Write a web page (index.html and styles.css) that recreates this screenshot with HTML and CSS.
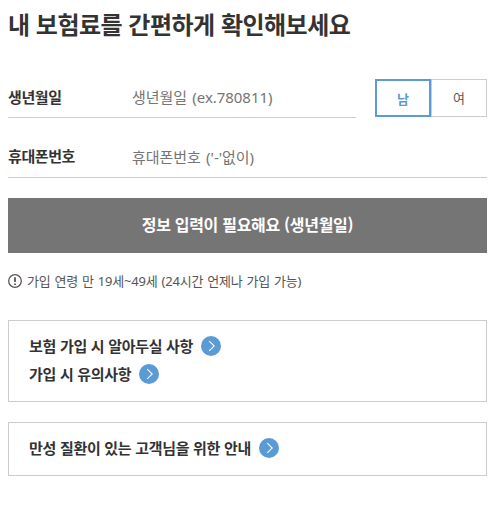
FILE: index.html
```html
<!DOCTYPE html>
<html lang="ko">
<head>
	<meta charset="UTF-8">
	<title>보험료 확인</title>
	<link rel="stylesheet" href="styles.css">
</head>
<body>
	<h1>내 보험료를 간편하게 확인해보세요</h1>
	<form>
		<div class="row">
			<div class="field">
				<label for="birth">생년월일</label>
				<input type="text" id="birth" name="birth" placeholder="생년월일 (ex.780811)">
			</div>
			<div class="gender">
				<button type="button" class="on">남</button>
				<button type="button">여</button>
			</div>
		</div>
		<div class="row">
			<div class="field phone">
				<label for="phone">휴대폰번호</label>
				<input type="text" id="phone" name="phone" placeholder="휴대폰번호 ('-'없이)">
			</div>
		</div>
		<button type="button" class="submit">정보 입력이 필요해요 (생년월일)</button>
	</form>

	<p class="notice">
		<svg width="14" height="14" viewBox="0 0 14 14"><circle cx="7" cy="7" r="6.3" fill="none" stroke="#555" stroke-width="1.3"/><path d="M7 3.2v4.9M7 9.4v1.6" stroke="#555" stroke-width="1.8"/></svg>
		<span>가입 연령 만 19세~49세 (24시간 언제나 가입 가능)</span>
	</p>

	<div class="box">
		<a class="link">
			<span>보험 가입 시 알아두실 사항</span>
			<svg width="20" height="20" viewBox="0 0 20 20"><circle cx="10" cy="10" r="10" fill="#5b9bd5"/><path d="M8.2 5.2l5 4.8-5 4.8" fill="none" stroke="#fff" stroke-width="1.1"/></svg>
		</a>
		<a class="link">
			<span>가입 시 유의사항</span>
			<svg width="20" height="20" viewBox="0 0 20 20"><circle cx="10" cy="10" r="10" fill="#5b9bd5"/><path d="M8.2 5.2l5 4.8-5 4.8" fill="none" stroke="#fff" stroke-width="1.1"/></svg>
		</a>
	</div>

	<div class="box">
		<a class="link">
			<span>만성 질환이 있는 고객님을 위한 안내</span>
			<svg width="20" height="20" viewBox="0 0 20 20"><circle cx="10" cy="10" r="10" fill="#5b9bd5"/><path d="M8.2 5.2l5 4.8-5 4.8" fill="none" stroke="#fff" stroke-width="1.1"/></svg>
		</a>
	</div>
</body>
</html>
```
FILE: styles.css
```css
* {
	box-sizing: border-box;
}
body {
	width: 479px;
	margin: 0 0 0 8px;
	background: #fff;
	color: #333;
	font-family: "Noto Sans CJK KR", sans-serif;
}
h1 {
	margin: 0;
	padding-top: 6px;
	height: 79px;
	font-size: 24px;
	line-height: 36px;
	font-weight: 700;
	letter-spacing: -0.5px;
	white-space: nowrap;
}
button,
input {
	font-family: inherit;
}
.row {
	display: flex;
	justify-content: space-between;
}
.field {
	display: flex;
	align-items: center;
	width: 348px;
	height: 39px;
	padding-bottom: 4px;
	border-bottom: 1px solid #ccc;
}
.field.phone {
	width: 100%;
	height: 60px;
	padding-top: 20px;
}
.field label {
	width: 124px;
	font-size: 15px;
	font-weight: 700;
	letter-spacing: -0.4px;
}
.field input {
	flex: 1;
	min-width: 0;
	padding: 2px 0 0;
	border: 0;
	outline: 0;
	background: none;
	font-family: "Noto Sans", "Noto Sans CJK KR", sans-serif;
	font-size: 15px;
	letter-spacing: -0.05px;
	word-spacing: 1.5px;
}
.field input::placeholder {
	color: #757575;
}
.gender {
	display: flex;
	height: 38px;
}
.gender button {
	width: 56px;
	padding: 0 0 2px;
	border: 1px solid #ccc;
	background: #fff;
	color: #555;
	font-size: 13px;
}
.gender .on {
	padding: 0;
	border: 2px solid #5b9bd5;
	color: #5b9bd5;
	font-weight: 700;
}
.submit {
	display: block;
	width: 100%;
	height: 55px;
	margin-top: 20px;
	padding-bottom: 5px;
	border: 0;
	background: #757575;
	color: #fff;
	font-size: 16px;
	font-weight: 700;
	letter-spacing: -0.3px;
}
.notice {
	display: flex;
	align-items: center;
	gap: 5px;
	height: 20px;
	margin: 18px 0 29px;
	color: #555;
	font-family: "Noto Sans", "Noto Sans CJK KR", sans-serif;
	font-size: 13px;
	letter-spacing: -0.17px;
	word-spacing: 0.7px;
}
.notice span {
	padding-bottom: 2px;
}
.box {
	margin-bottom: 20px;
	padding: 11px 20px 13px;
	border: 1px solid #ccc;
}
.link {
	display: flex;
	align-items: center;
	gap: 8px;
	height: 28px;
	font-size: 15px;
	font-weight: 700;
	letter-spacing: -0.3px;
}
.link span {
	padding-bottom: 2px;
}
```
